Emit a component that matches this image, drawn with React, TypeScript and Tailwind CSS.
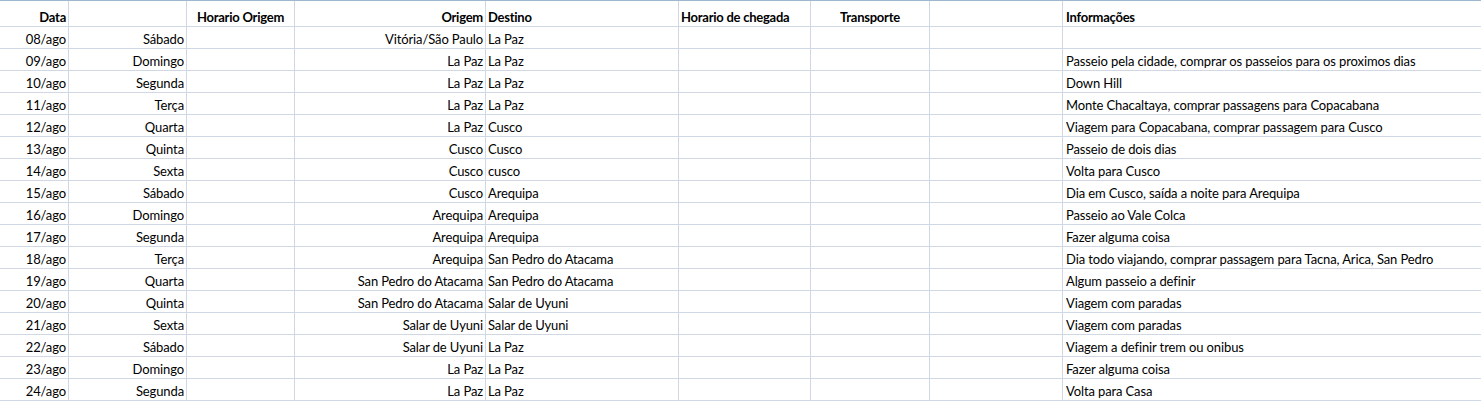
import React from "react";

type Row = [string, string, string, string, string];

const rows: Row[] = [
  ["08/ago", "Sábado", "Vitória/São Paulo", "La Paz", ""],
  ["09/ago", "Domingo", "La Paz", "La Paz", "Passeio pela cidade, comprar os passeios para os proximos dias"],
  ["10/ago", "Segunda", "La Paz", "La Paz", "Down Hill"],
  ["11/ago", "Terça", "La Paz", "La Paz", "Monte Chacaltaya, comprar passagens para Copacabana"],
  ["12/ago", "Quarta", "La Paz", "Cusco", "Viagem para Copacabana, comprar passagem para Cusco"],
  ["13/ago", "Quinta", "Cusco", "Cusco", "Passeio de dois dias"],
  ["14/ago", "Sexta", "Cusco", "cusco", "Volta para Cusco"],
  ["15/ago", "Sábado", "Cusco", "Arequipa", "Dia em Cusco, saída a noite para Arequipa"],
  ["16/ago", "Domingo", "Arequipa", "Arequipa", "Passeio ao Vale Colca"],
  ["17/ago", "Segunda", "Arequipa", "Arequipa", "Fazer alguma coisa"],
  ["18/ago", "Terça", "Arequipa", "San Pedro do Atacama", "Dia todo viajando, comprar passagem para Tacna, Arica, San Pedro"],
  ["19/ago", "Quarta", "San Pedro do Atacama", "San Pedro do Atacama", "Algum passeio a definir"],
  ["20/ago", "Quinta", "San Pedro do Atacama", "Salar de Uyuni", "Viagem com paradas"],
  ["21/ago", "Sexta", "Salar de Uyuni", "Salar de Uyuni", "Viagem com paradas"],
  ["22/ago", "Sábado", "Salar de Uyuni", "La Paz", "Viagem a definir trem ou onibus"],
  ["23/ago", "Domingo", "La Paz", "La Paz", "Fazer alguma coisa"],
  ["24/ago", "Segunda", "La Paz", "La Paz", "Volta para Casa"],
];

const gridCols =
  "grid grid-cols-[69px_118px_108px_191px_193px_132px_119px_133px_1fr]";
const cell =
  "flex items-end border-r border-b border-[#d0d7e5] pb-[1px] leading-[16px] whitespace-nowrap overflow-visible";

export default function App() {
  return (
    <div
      className="w-[1481px] h-[403px] bg-white text-[#000000] text-[13px] tracking-[-0.12px] overflow-hidden"
      style={{ fontFamily: "Lato, 'Open Sans', sans-serif" }}
    >
      <div className={`${gridCols} h-[27px] border-t border-[#9eb6ce] font-bold tracking-[-0.25px]`}>
        <div className={`${cell} justify-end pr-[2px]`}>Data</div>
        <div className={cell}></div>
        <div className={`${cell} justify-center`}>Horario Origem</div>
        <div className={`${cell} justify-end pr-[2px]`}>Origem</div>
        <div className={`${cell} pl-[2px]`}>Destino</div>
        <div className={`${cell} pl-[2px]`}>Horario de chegada</div>
        <div className={`${cell} justify-center`}>Transporte</div>
        <div className={cell}></div>
        <div className={`${cell} border-r-0 pl-[3px]`}>Informações</div>
      </div>
      {rows.map((r, i) => (
        <div key={i} className={`${gridCols} h-[22px]`}>
          <div className={`${cell} justify-end pr-[2px]`}>{r[0]}</div>
          <div className={`${cell} justify-end pr-[2px]`}>{r[1]}</div>
          <div className={cell}></div>
          <div className={`${cell} justify-end pr-[2px]`}>{r[2]}</div>
          <div className={`${cell} pl-[2px]`}>{r[3]}</div>
          <div className={cell}></div>
          <div className={cell}></div>
          <div className={cell}></div>
          <div className={`${cell} border-r-0 pl-[3px]`}>{r[4]}</div>
        </div>
      ))}
    </div>
  );
}
